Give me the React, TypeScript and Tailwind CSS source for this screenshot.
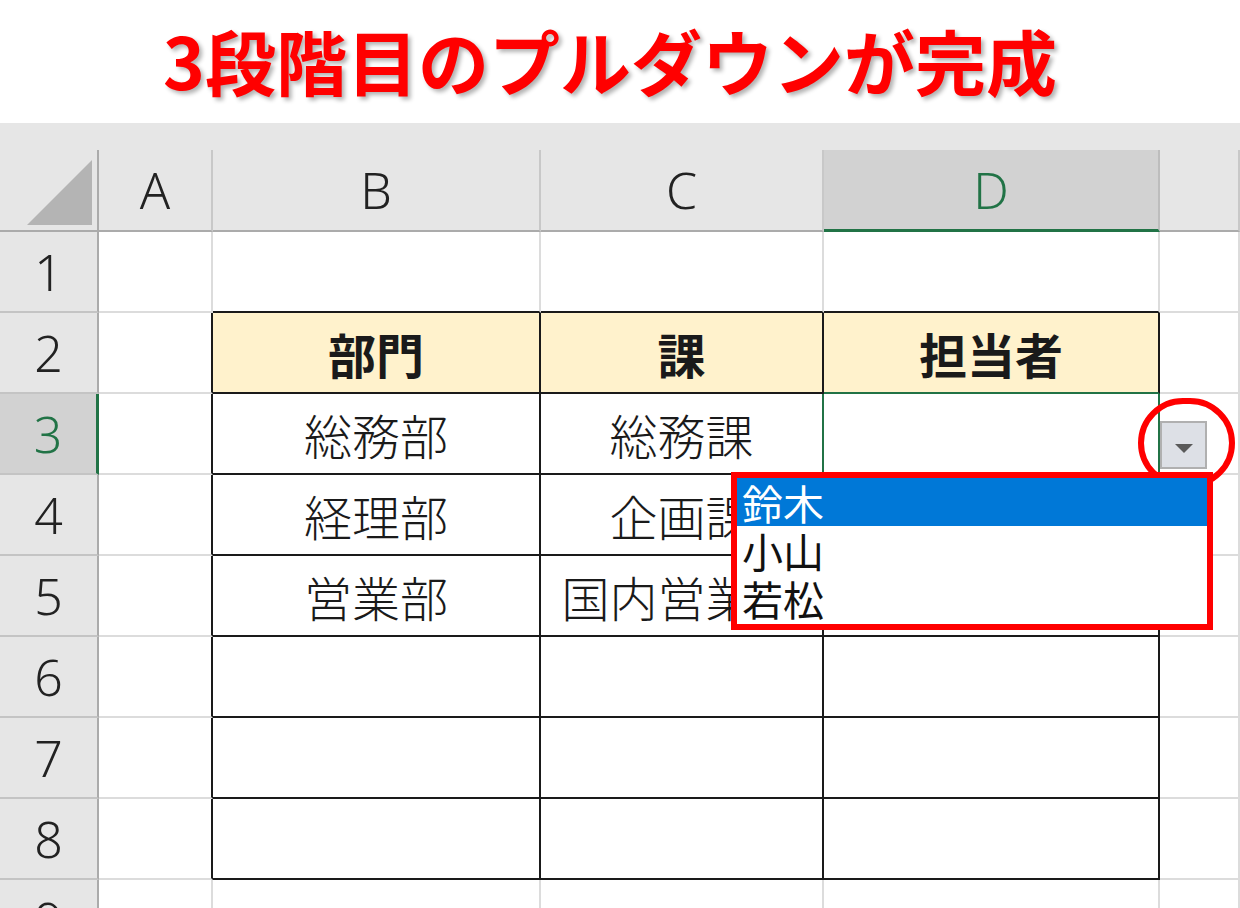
import React from "react";

const COLS = ["A", "B", "C", "D", ""];
const ROWS = [1, 2, 3, 4, 5, 6, 7, 8, 9];

const data: Record<number, string[]> = {
  2: ["部門", "課", "担当者"],
  3: ["総務部", "総務課", ""],
  4: ["経理部", "企画課", ""],
  5: ["営業部", "国内営業課", ""],
};

const gridCols = "grid grid-cols-[99px_114px_328px_283px_336px_1fr]";
const latin = "font-['Noto_Sans','Open_Sans',sans-serif] font-light";
const jp = "font-['Noto_Sans_CJK_JP',sans-serif]";

const DropdownList = () => (
  <>
    {/* dropdown arrow button */}
    <div className="absolute left-[calc(100%+2px)] top-[27px] z-10 flex h-[48px] w-[47px] items-center justify-center border-2 border-[#b0b0b0] bg-[#dde0e6]">
      <svg width="18" height="9" viewBox="0 0 18 9" className="mt-[6px]">
        <path d="M0 0 L18 0 L9 9 Z" fill="#5a5a5a" />
      </svg>
    </div>
    {/* red circle highlight */}
    <div className="absolute left-[314px] top-[4px] z-20 h-[90px] w-[97px] rounded-full border-[6px] border-[#ff0000]" />
    {/* option list */}
    <div className="absolute left-[-93px] top-[78px] z-20 h-[158px] w-[482px] border-[6px] border-[#ff0000] bg-white">
      <div className={`flex h-[48px] items-center bg-[#0078d7] pl-[5px] text-[41px] leading-none text-white ${jp}`}>
        鈴木
      </div>
      <div className={`flex h-[48px] items-center pl-[5px] text-[41px] leading-none text-[#111] ${jp}`}>
        小山
      </div>
      <div className={`flex h-[48px] items-center pl-[5px] text-[41px] leading-none text-[#111] ${jp}`}>
        若松
      </div>
    </div>
  </>
);

const BodyCell = ({ row, col }: { row: number; col: number }) => {
  const inTable = row >= 2 && row <= 8 && col >= 1 && col <= 3;
  const rightBlack = inTable || (col === 0 && row >= 2 && row <= 8);
  const rightGreen = row === 3 && (col === 2 || col === 3);
  const bottomBlack = inTable || (row === 1 && col >= 1 && col <= 3);
  const bottomGreen = (row === 2 || row === 3) && col === 3;

  const right = rightGreen
    ? "border-r-[#217346]"
    : rightBlack
      ? "border-r-[#1a1a1a]"
      : "border-r-[#dcdcdc]";
  const bottom = bottomGreen
    ? "border-b-[#217346]"
    : bottomBlack
      ? "border-b-[#1a1a1a]"
      : "border-b-[#dcdcdc]";
  const bg = row === 2 && inTable ? "bg-[#fff2cc]" : "bg-white";
  const text = col >= 1 && col <= 3 ? data[row]?.[col - 1] ?? "" : "";
  const bold = row === 2 ? "font-bold" : "font-light";

  return (
    <div
      className={`relative flex h-[81px] items-center justify-center border-r-2 border-b-2 ${right} ${bottom} ${bg}`}
    >
      {text && (
        <span className={`whitespace-nowrap text-[48px] leading-none text-[#1a1a1a] ${bold} ${jp}`}>
          {text}
        </span>
      )}
      {row === 3 && col === 3 && <DropdownList />}
    </div>
  );
};

export default function App() {
  return (
    <div className="h-[908px] w-[1240px] overflow-hidden bg-white">
      {/* Title */}
      <div className="flex h-[123px] items-center justify-center pr-[20px] pb-[4px]">
        <h1
          className={`text-[71px] leading-none font-bold text-[#ff0000] [text-shadow:3px_3px_4px_rgba(0,0,0,0.3)] ${jp}`}
        >
          3段階目のプルダウンが完成
        </h1>
      </div>

      {/* Sheet */}
      <div className="h-[27px] bg-[#e6e6e6]" />
      <div className={`${gridCols} h-[82px] bg-[#e6e6e6]`}>
        <div className="flex items-end justify-end border-r-2 border-b-2 border-[#ababab] pr-[5px] pb-[5px]">
          <svg width="65" height="65" viewBox="0 0 65 65">
            <path d="M65 0 L65 65 L0 65 Z" fill="#b4b4b4" />
          </svg>
        </div>
        {COLS.map((c) =>
          c === "D" ? (
            <div
              key="D"
              className={`flex items-center justify-center border-b-[3px] border-b-[#217346] border-r-2 border-r-[#bdbdbd] bg-[#d2d2d2] text-[50px] leading-none text-[#217346] ${latin}`}
            >
              D
            </div>
          ) : (
            <div
              key={c || "E"}
              className={`flex items-center justify-center border-r-2 border-b-2 border-r-[#c8c8c8] border-b-[#ababab] text-[50px] leading-none text-[#222] ${latin}`}
            >
              {c}
            </div>
          ),
        )}
      </div>

      {ROWS.map((r) => (
        <div key={r} className={gridCols}>
          {r === 3 ? (
            <div
              className={`flex h-[81px] items-center justify-center border-r-[3px] border-b-2 border-r-[#217346] border-b-[#c4c4c4] bg-[#d2d2d2] text-[50px] leading-none text-[#217346] ${latin}`}
            >
              {r}
            </div>
          ) : (
            <div
              className={`flex h-[81px] items-center justify-center border-r-2 border-b-2 border-r-[#ababab] border-b-[#c4c4c4] bg-[#e6e6e6] text-[50px] leading-none text-[#222] ${latin}`}
            >
              {r}
            </div>
          )}
          {COLS.map((_, ci) => (
            <BodyCell key={ci} row={r} col={ci} />
          ))}
        </div>
      ))}
    </div>
  );
}
